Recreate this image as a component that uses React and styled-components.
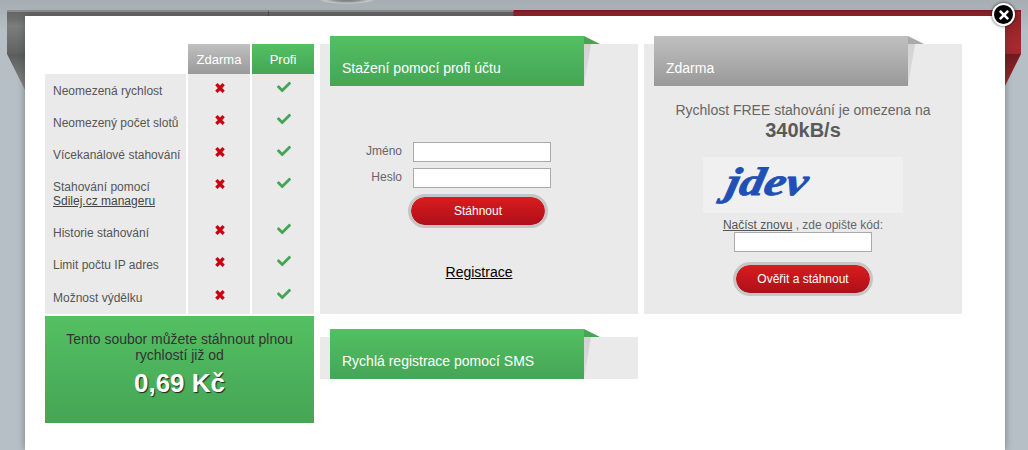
import React from 'react';
import styled, { createGlobalStyle, css } from 'styled-components';
import { FaCheck, FaTimes } from 'react-icons/fa';

const features = [
  { label: 'Neomezená rychlost' },
  { label: 'Neomezený počet slotů' },
  { label: 'Vícekanálové stahování' },
  { label: 'Stahování pomocí', link: 'Sdilej.cz manageru' },
  { label: 'Historie stahování' },
  { label: 'Limit počtu IP adres' },
  { label: 'Možnost výdělku', last: true },
];

const GREEN = 'linear-gradient(#53c062, #45a555)';
const GREY = 'linear-gradient(#c0c0c0, #999)';

const GlobalStyle = createGlobalStyle`
  html, body {
    margin: 0;
    height: 450px;
    overflow: hidden;
    background: #b6bfc5;
    font-family: "Liberation Sans", Arial, sans-serif;
  }
`;

const Backdrop = styled.div`
  width: 1028px;
  height: 450px;
  padding: 10px 7px 0;
  box-sizing: border-box;
  background:
    radial-gradient(ellipse 28px 4px at 347px 0, #77797a 0, #8f9496 45%, #c4c8ca 80%, transparent 100%),
    linear-gradient(#a6aeb2 0, #a9b2b6 10px, #b6bfc5 30px);
`;

const TopBar = styled.div`
  display: flex;
  height: 44px;
`;

const BarPart = styled.div`
  border-top: 2px solid ${(p) => (p.$red ? '#7d1c20' : '#8c8c8c')};
  box-sizing: border-box;
  ${(p) => p.$red
    ? css`
        flex: 1;
        background: linear-gradient(#8f2327 0, #8f2327 6px, #a8292f 34px, #9c272c 44px);
      `
    : css`
        width: ${p.$width}px;
        border-right: 1px solid #4e4e4e;
        background: linear-gradient(#666 0, #6c6c6c 6px, #7d7d7d 14px, #5f5f5f 44px);
      `}
`;

const BarTails = styled.div`
  display: flex;
  justify-content: space-between;
  height: 36px;
`;

const Tail = styled.div`
  width: 18px;
  background: ${(p) => (p.$red
    ? 'linear-gradient(#6e1a1e, #a8292f)'
    : 'linear-gradient(#5c5c5c, #8a8a8a)')};
  clip-path: ${(p) => (p.$red
    ? 'polygon(0 0, 100% 0, 0 100%)'
    : 'polygon(0 0, 100% 0, 100% 100%)')};
`;

const Modal = styled.div`
  position: absolute;
  top: 16px;
  left: 25px;
  width: 980px;
  height: 434px;
  box-sizing: border-box;
  padding: 28px 20px 0;
  background: #fff;
  box-shadow: 0 0 7px rgba(40, 50, 60, 0.45);
  display: grid;
  grid-template-columns: 269px 318px 318px;
  grid-template-rows: 270px auto;
  column-gap: 6px;
  row-gap: 2px;
  align-content: start;
`;

const CloseButton = styled.div`
  position: absolute;
  top: -13px;
  right: -10px;
  width: 19px;
  height: 19px;
  border: 2px solid #fff;
  border-radius: 50%;
  background: #000;
  color: #fff;
  display: flex;
  align-items: center;
  justify-content: center;
  box-shadow: 0 0 3px rgba(0, 0, 0, 0.8);
  font-size: 14px;
`;

const Compare = styled.div`
  display: grid;
  grid-template-columns: 141px 62px 62px;
  grid-template-rows: 30px repeat(3, 32px) 46px 32px 32px 34px;
  column-gap: 2px;
`;

const HeadCell = styled.div`
  grid-column: ${(p) => p.$col};
  background: ${(p) => (p.$green ? GREEN : GREY)};
  color: #fff;
  font-size: 13px;
  display: flex;
  align-items: center;
  justify-content: center;
  padding-top: 1px;
  box-sizing: border-box;
`;

const FeatureLabel = styled.div`
  background: #eaeaea;
  color: #555;
  font-size: 12px;
  line-height: 14px;
  padding: 10px 0 0 8px;
  white-space: nowrap;
  ${(p) => p.$last && 'padding-top: 11px;'}
`;

const FeatureLink = styled.a`
  color: #444;
  text-decoration: underline;
  display: block;
`;

const MarkCell = styled.div`
  background: #eaeaea;
  text-align: center;
  padding: 8px 0 0 1px;
  line-height: 12px;
  font-size: 14px;
  color: ${(p) => (p.$ok ? '#45a555' : '#c8000f')};
  ${(p) => p.$ok && 'padding-top: 6px; line-height: 14px;'}
  ${(p) => p.$last && `padding-top: ${p.$ok ? 7 : 9}px;`}
`;

const CrossIcon = styled.svg`
  display: inline-block;
  width: 12px;
  height: 12px;
`;

const Promo = styled.div`
  background: ${GREEN};
  height: 107px;
  box-sizing: border-box;
  padding-top: 15px;
  text-align: center;
  color: #333;
  font-size: 14px;
  line-height: 16px;
`;

const PromoText = styled.div`
  padding: 0 10px;
`;

const Price = styled.div`
  color: #fff;
  font-size: 26px;
  font-weight: bold;
  line-height: 28px;
  margin-top: 6px;
  text-shadow: 1px 1px 1px #222;
`;

const Panel = styled.div`
  background: #eaeaea;
  height: ${(p) => p.$height}px;
  ${(p) => p.$spaced && 'margin-top: 21px;'}
`;

const Ribbon = styled.div`
  position: relative;
  top: -8px;
  margin: 0 0 -8px 10px;
  width: 254px;
  height: 50px;
  box-sizing: border-box;
  padding: 23px 0 0 12px;
  background: ${(p) => (p.$grey ? GREY : GREEN)};
  color: #fff;
  font-size: 14px;
  line-height: 18px;

  &::before {
    content: '';
    position: absolute;
    left: 100%;
    top: 0;
    width: 16px;
    height: 8px;
    background: ${(p) => (p.$grey ? '#a9a9a9' : '#45a555')};
    clip-path: polygon(0 0, 100% 100%, 0 100%);
  }

  &::after {
    content: '';
    position: absolute;
    left: 100%;
    top: 8px;
    width: 7px;
    height: 42px;
    background: linear-gradient(#d2d2d2, #dedede);
    clip-path: polygon(0 0, 100% 0, 0 100%);
  }
`;

const LoginForm = styled.form`
  display: grid;
  grid-template-columns: 82px 138px;
  column-gap: 11px;
  row-gap: 6px;
  margin: 56px 0 0 0;
  justify-content: start;
`;

const FieldLabel = styled.label`
  font-size: 12px;
  color: #666;
  line-height: 18px;
  text-align: right;
`;

const TextInput = styled.input`
  display: block;
  width: 138px;
  height: 20px;
  box-sizing: border-box;
  border: 1px solid #aaa;
  background: #fff;
  padding: 0 2px;
  margin: 0;
  border-radius: 0;
  outline: none;
`;

const RedButton = styled.button`
  display: block;
  width: 140px;
  height: 34px;
  box-sizing: border-box;
  border: 3px solid #c6c6c6;
  border-radius: 17px;
  padding: 0;
  background: linear-gradient(#da1c1e, #ae0f1a);
  background-clip: padding-box;
  color: #fff;
  font: 12px "Liberation Sans", Arial, sans-serif;
  ${(p) => p.$grid && 'grid-column: 1 / 3; margin-left: 88px;'}
`;

const RegisterLink = styled.a`
  display: block;
  margin-top: 35px;
  text-align: center;
  font-size: 14px;
  line-height: 18px;
  color: #000;
  text-decoration: underline;
`;

const FreeBody = styled.div`
  text-align: center;
  color: #666;
  padding-top: 16px;
`;

const FreeNote = styled.div`
  font-size: 14px;
  line-height: 17px;
`;

const Speed = styled.div`
  font-size: 20px;
  font-weight: bold;
  line-height: 22px;
  color: #5a5a5a;
`;

const Captcha = styled.div`
  width: 200px;
  height: 56px;
  margin: 16px auto 0;
  background: #f0f0f0;
  box-sizing: border-box;
  padding: 0 0 0 24px;
  text-align: left;
  overflow: hidden;
`;

const CaptchaWord = styled.span`
  display: inline-block;
  color: #1f50b6;
  font: italic bold 46px/50px "Liberation Serif", serif;
  -webkit-text-stroke: 1px #1f50b6;
  transform: skewX(-12deg) scale(1.06, 0.86);
  transform-origin: left center;
`;

const CaptchaHint = styled.div`
  font-size: 12px;
  line-height: 14px;
  margin-top: 5px;
`;

const HintLink = styled.a`
  color: #555;
  text-decoration: underline;
`;

const CaptchaInput = styled(TextInput)`
  margin: 0 auto;
`;

const CaptchaButton = styled(RedButton)`
  margin: 10px auto 0;
`;

function Cross() {
  return (
    <CrossIcon viewBox="0 0 12 12">
      <path d="M2.4 2.2L9.6 9.8M9.6 2.2L2.4 9.8" stroke="currentColor" strokeWidth="3.3" fill="none" />
    </CrossIcon>
  );
}

export default function App() {
  return (
    <>
      <GlobalStyle />
      <Backdrop>
        <TopBar>
          <BarPart $width={262} />
          <BarPart $width={245} />
          <BarPart $red />
        </TopBar>
        <BarTails>
          <Tail />
          <Tail $red />
        </BarTails>
      </Backdrop>

      <Modal>
        <CloseButton><FaTimes /></CloseButton>

        <Compare>
          <HeadCell $col={2}>Zdarma</HeadCell>
          <HeadCell $col={3} $green>Profi</HeadCell>
          {features.map((f) => (
            <React.Fragment key={f.label}>
              <FeatureLabel $last={f.last}>
                {f.label}
                {f.link && <FeatureLink>{f.link}</FeatureLink>}
              </FeatureLabel>
              <MarkCell $last={f.last}><Cross /></MarkCell>
              <MarkCell $ok $last={f.last}><FaCheck /></MarkCell>
            </React.Fragment>
          ))}
        </Compare>

        <Panel $height={270}>
          <Ribbon>Stažení pomocí profi účtu</Ribbon>
          <LoginForm>
            <FieldLabel>Jméno</FieldLabel>
            <TextInput />
            <FieldLabel>Heslo</FieldLabel>
            <TextInput type="password" />
            <RedButton type="button" $grid>Stáhnout</RedButton>
          </LoginForm>
          <RegisterLink>Registrace</RegisterLink>
        </Panel>

        <Panel $height={270}>
          <Ribbon $grey>Zdarma</Ribbon>
          <FreeBody>
            <FreeNote>Rychlost FREE stahování je omezena na</FreeNote>
            <Speed>340kB/s</Speed>
            <Captcha><CaptchaWord>jdev</CaptchaWord></Captcha>
            <CaptchaHint><HintLink>Načíst znovu</HintLink> , zde opište kód:</CaptchaHint>
            <CaptchaInput />
            <CaptchaButton type="button">Ověřit a stáhnout</CaptchaButton>
          </FreeBody>
        </Panel>

        <Promo>
          <PromoText>Tento soubor můžete stáhnout plnou rychlostí již od</PromoText>
          <Price>0,69 Kč</Price>
        </Promo>

        <Panel $height={42} $spaced>
          <Ribbon>Rychlá registrace pomocí SMS</Ribbon>
        </Panel>
      </Modal>
    </>
  );
}
